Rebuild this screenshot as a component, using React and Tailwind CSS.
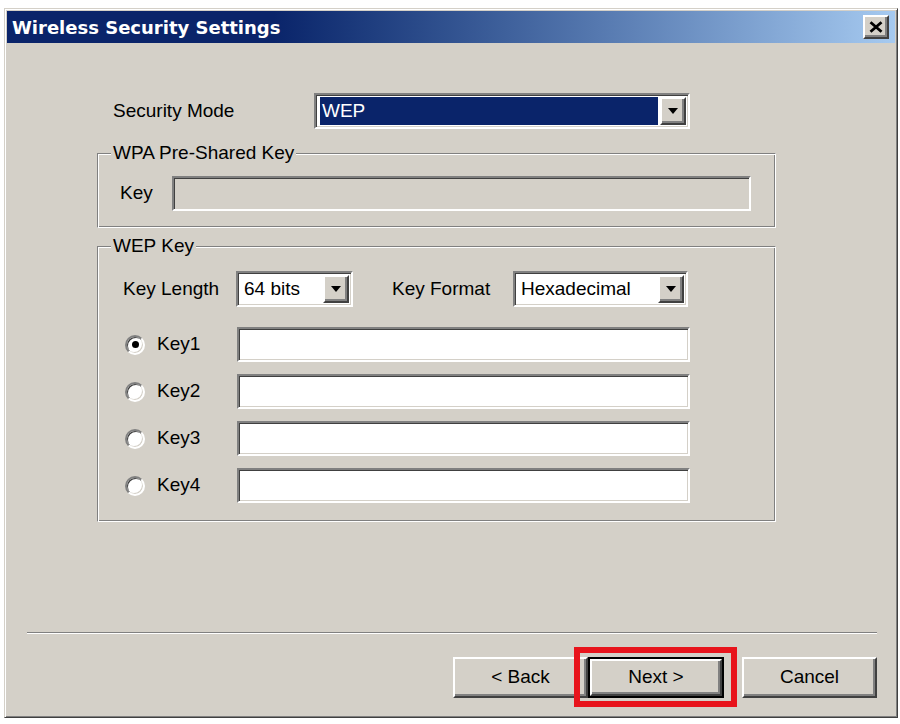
import React from "react";

const sunken =
  "border-2 border-t-[#808080] border-l-[#808080] border-b-white border-r-white shadow-[inset_1px_1px_0_#404040,inset_-1px_-1px_0_#d4d0c8]";
const raised =
  "border-2 border-t-white border-l-white border-b-[#404040] border-r-[#404040] shadow-[inset_-2px_-2px_0_#808080]";
const etched =
  "border border-t-[#808080] border-l-[#808080] border-b-white border-r-white shadow-[inset_1px_1px_0_#fff,inset_-1px_-1px_0_#808080]";

function Arrow() {
  return (
    <svg width="10" height="6" viewBox="0 0 10 6">
      <path d="M0 0h10L5 6z" fill="#000" />
    </svg>
  );
}

function Combo({ width, value, selected }) {
  return (
    <div className={`${width} h-[36px] flex bg-white p-[2px] ${sunken}`}>
      <div className="flex-1 flex px-[2px]">
        <div
          className={`flex-1 flex items-center pl-[2px] ${selected ? "bg-[#0a246a] text-white" : ""}`}
        >
          {value}
        </div>
      </div>
      <div className={`w-[26px] flex items-center justify-center bg-[#d4d0c8] ${raised}`}>
        <Arrow />
      </div>
    </div>
  );
}

function Radio({ checked }) {
  return (
    <div className="w-[20px] h-[20px] rounded-full bg-white border-2 border-t-[#808080] border-l-[#808080] border-b-white border-r-white shadow-[inset_1px_1px_0_#404040,inset_-1px_-1px_0_#d4d0c8] flex items-center justify-center">
      {checked && <div className="w-[7px] h-[7px] rounded-full bg-black" />}
    </div>
  );
}

function GroupLabel({ children }) {
  return (
    <span className="self-start -mt-[11px] ml-[13px] px-[2px] bg-[#d4d0c8] leading-[20px]">
      {children}
    </span>
  );
}

function KeyRow({ name, checked }) {
  return (
    <div className="flex items-center">
      <Radio checked={checked} />
      <span className="ml-[12px] w-[80px]">{name}</span>
      <div className={`w-[453px] h-[35px] bg-white ${sunken}`} />
    </div>
  );
}

function Button({ children, width }) {
  return (
    <div className={`${width} h-[41px] flex items-center justify-center bg-[#d4d0c8] ${raised}`}>
      {children}
    </div>
  );
}

export default function App() {
  return (
    <div className="min-h-screen bg-white pt-[8px] pl-[4px] font-['Liberation_Sans',Arial,sans-serif] text-[19px] text-black">
      <div className="w-[894px] h-[710px] bg-[#d4d0c8] border border-t-[#d4d0c8] border-l-[#d4d0c8] border-b-[#404040] border-r-[#404040] shadow-[inset_1px_1px_0_#fff,inset_-1px_-1px_0_#808080] p-[2px] flex flex-col">
        {/* title bar */}
        <div className="h-[32px] flex items-center justify-between pl-[5px] pr-[6px] bg-linear-to-r from-[#0a246a] from-30% to-[#a6caf0]">
          <span className="text-white font-bold font-['DejaVu_Sans',Verdana,sans-serif] text-[18px]">
            Wireless Security Settings
          </span>
          <div className={`w-[26px] h-[24px] flex items-center justify-center bg-[#d4d0c8] ${raised}`}>
            <svg width="14" height="12" viewBox="0 0 14 12">
              <path d="M1.5 1.2l11 9.6M12.5 1.2l-11 9.6" stroke="#000" strokeWidth="2.8" />
            </svg>
          </div>
        </div>

        {/* security mode */}
        <div className="mt-[50px] pl-[106px] flex items-center">
          <span className="w-[201px]">Security Mode</span>
          <Combo width="w-[376px]" value="WEP" selected />
        </div>

        {/* WPA */}
        <div className={`mt-[24px] ml-[90px] w-[679px] h-[75px] flex flex-col ${etched}`}>
          <GroupLabel>WPA Pre-Shared Key</GroupLabel>
          <div className="mt-[13px] pl-[22px] flex items-center">
            <span className="w-[52px]">Key</span>
            <div className={`w-[579px] h-[35px] bg-[#d4d0c8] ${sunken}`} />
          </div>
        </div>

        {/* WEP */}
        <div className={`mt-[18px] ml-[90px] w-[679px] h-[276px] flex flex-col ${etched}`}>
          <GroupLabel>WEP Key</GroupLabel>
          <div className="mt-[15px] pl-[25px] flex items-center">
            <span className="w-[113px]">Key Length</span>
            <Combo width="w-[117px]" value="64 bits" />
            <span className="ml-[39px] w-[121px]">Key Format</span>
            <Combo width="w-[175px]" value="Hexadecimal" />
          </div>
          <div className="mt-[20px] pl-[27px] flex flex-col gap-[12px]">
            <KeyRow name="Key1" checked />
            <KeyRow name="Key2" />
            <KeyRow name="Key3" />
            <KeyRow name="Key4" />
          </div>
        </div>

        {/* separator */}
        <div className="mt-[110px] ml-[20px] w-[850px] h-[2px] border-t border-t-[#808080] border-b border-b-white" />

        {/* buttons */}
        <div className="mt-[23px] ml-[446px] flex">
          <Button width="w-[135px]">&lt; Back</Button>
          <div className="relative">
            <div className="w-[136px] h-[41px] border-2 border-black flex">
              <div className={`flex-1 flex items-center justify-center bg-[#d4d0c8] ${raised}`}>
                Next &gt;
              </div>
            </div>
            <div className="absolute -left-[14px] -right-[13px] -top-[10px] -bottom-[9px] border-[6px] border-[#e8141c] z-10" />
          </div>
          <div className="ml-[18px]">
            <Button width="w-[135px]">Cancel</Button>
          </div>
        </div>
      </div>
    </div>
  );
}
